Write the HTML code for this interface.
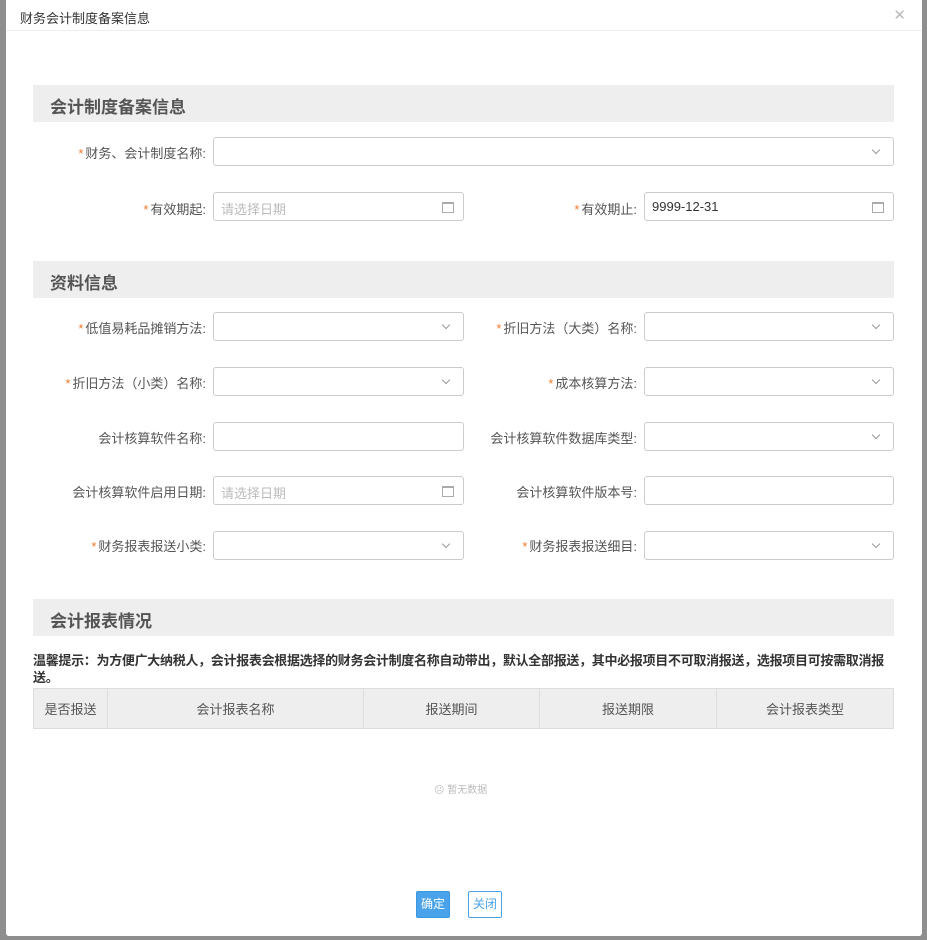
<!DOCTYPE html>
<html><head><meta charset="utf-8"><style>
*{box-sizing:border-box;margin:0;padding:0}
body{width:927px;height:940px;background:#8e8e8e;font-family:"Liberation Sans","Noto Sans CJK SC",sans-serif;position:relative;overflow:hidden;color:#333}
.m{position:absolute;left:6px;top:0;width:916px;height:936px;background:#fff;border-radius:0 0 3px 3px}
.a{position:absolute}
.title{left:14px;top:8px;font-size:13px;color:#333}
.hl{left:0;top:30px;width:916px;height:1px;background:#eee}
.x{right:16px;top:6px;font-size:15px;color:#bbb}
.sec{left:27px;width:861px;height:37px;background:#eee;font-size:17px;font-weight:bold;color:#555;padding:8px 0 0 17px}
.lbl{font-size:13px;color:#555;text-align:right;width:200px}
.lbl b{color:#f07a2a;font-weight:normal;margin-right:2px}
.in{height:29px;border:1px solid #ccc;border-radius:3px;background:#fff;font-size:13px;padding:6px 7px;color:#333}
.in.ph{color:#bbb}
.dd:after{content:"";position:absolute;right:14px;top:9px;width:5px;height:5px;border-right:1px solid #999;border-bottom:1px solid #999;transform:rotate(45deg)}
.cal:after{content:"";position:absolute;right:9px;top:9px;width:10px;height:8px;border:1px solid #aaa;border-top-width:2px}
.tip{left:27px;top:652px;width:866px;font-size:13px;font-weight:bold;color:#333;line-height:17px;letter-spacing:-0.3px}
table{position:absolute;left:27px;top:688px;width:861px;border-collapse:collapse;background:#eee}
td{border:1px solid #ddd;height:40px;text-align:center;font-size:13px;color:#555}
.btn{top:891px;height:27px;width:34px;font-size:12px;text-align:center;line-height:25px;border-radius:2px}
</style></head><body>
<div class="m">
<div class="a title">财务会计制度备案信息</div>
<div class="a x">✕</div>
<div class="a hl"></div>

<div class="a sec" style="top:85px">会计制度备案信息</div>
<div class="a lbl" style="left:0;top:143px"><b>*</b>财务、会计制度名称:</div>
<div class="a in dd" style="left:207px;top:137px;width:681px"></div>
<div class="a lbl" style="left:0;top:199px"><b>*</b>有效期起:</div>
<div class="a in ph cal" style="left:207px;top:192px;width:251px">请选择日期</div>
<div class="a lbl" style="left:431px;top:199px"><b>*</b>有效期止:</div>
<div class="a in cal" style="left:638px;top:192px;width:250px">9999-12-31</div>

<div class="a sec" style="top:261px">资料信息</div>
<div class="a lbl" style="left:0;top:318px"><b>*</b>低值易耗品摊销方法:</div>
<div class="a in dd" style="left:207px;top:312px;width:251px"></div>
<div class="a lbl" style="left:431px;top:318px"><b>*</b>折旧方法（大类）名称:</div>
<div class="a in dd" style="left:638px;top:312px;width:250px"></div>

<div class="a lbl" style="left:0;top:373px"><b>*</b>折旧方法（小类）名称:</div>
<div class="a in dd" style="left:207px;top:367px;width:251px"></div>
<div class="a lbl" style="left:431px;top:373px"><b>*</b>成本核算方法:</div>
<div class="a in dd" style="left:638px;top:367px;width:250px"></div>

<div class="a lbl" style="left:0;top:428px">会计核算软件名称:</div>
<div class="a in" style="left:207px;top:422px;width:251px"></div>
<div class="a lbl" style="left:431px;top:428px">会计核算软件数据库类型:</div>
<div class="a in dd" style="left:638px;top:422px;width:250px"></div>

<div class="a lbl" style="left:0;top:482px">会计核算软件启用日期:</div>
<div class="a in ph cal" style="left:207px;top:476px;width:251px">请选择日期</div>
<div class="a lbl" style="left:431px;top:482px">会计核算软件版本号:</div>
<div class="a in" style="left:638px;top:476px;width:250px"></div>

<div class="a lbl" style="left:0;top:536px"><b>*</b>财务报表报送小类:</div>
<div class="a in dd" style="left:207px;top:531px;width:251px"></div>
<div class="a lbl" style="left:431px;top:536px"><b>*</b>财务报表报送细目:</div>
<div class="a in dd" style="left:638px;top:531px;width:250px"></div>

<div class="a sec" style="top:599px">会计报表情况</div>
<div class="a tip">温馨提示：为方便广大纳税人，会计报表会根据选择的财务会计制度名称自动带出，默认全部报送，其中必报项目不可取消报送，选报项目可按需取消报送。</div>
<table><tr><td style="width:74px">是否报送</td><td style="width:256px">会计报表名称</td><td style="width:176px">报送期间</td><td style="width:177px">报送期限</td><td>会计报表类型</td></tr></table>
<div class="a" style="left:428px;top:781px;font-size:10px;color:#bbb">☹ 暂无数据</div>
<div class="a btn" style="left:410px;background:#4aa3ea;color:#fff;border:1px solid #3c96df">确定</div>
<div class="a btn" style="left:462px;background:#fff;color:#4aa3ea;border:1px solid #4aa3ea">关闭</div>
</div>
</body></html>
